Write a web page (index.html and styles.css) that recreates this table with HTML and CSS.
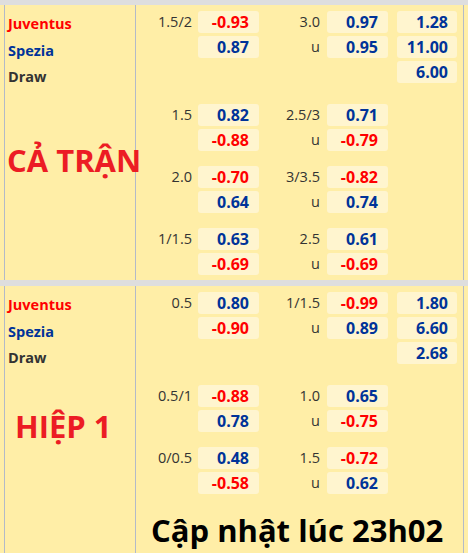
FILE: index.html
```html
<!DOCTYPE html>
<html lang="vi">
<head>
<meta charset="utf-8">
<title>Tỷ lệ Juventus - Spezia</title>
<link rel="stylesheet" href="styles.css">
</head>
<body>
<div class="bar"></div>
<section class="section">
  <div class="side">
    <div class="teams">
      <div class="home">Juventus</div>
      <div class="away">Spezia</div>
      <div class="draw">Draw</div>
    </div>
    <div class="title title-ft">CẢ TRẬN</div>
  </div>
  <div class="odds">
    <div class="group g3">
      <span class="lbl">1.5/2</span><span class="val red">-0.93</span><span class="lbl">3.0</span><span class="val blue">0.97</span><span class="val blue">1.28</span>
      <span class="lbl"></span><span class="val blue">0.87</span><span class="lbl">u</span><span class="val blue">0.95</span><span class="val blue">11.00</span>
      <span class="lbl"></span><span></span><span class="lbl"></span><span></span><span class="val blue">6.00</span>
    </div>
    <div class="group">
      <span class="lbl">1.5</span><span class="val blue">0.82</span><span class="lbl">2.5/3</span><span class="val blue">0.71</span><span></span>
      <span class="lbl"></span><span class="val red">-0.88</span><span class="lbl">u</span><span class="val red">-0.79</span><span></span>
    </div>
    <div class="group">
      <span class="lbl">2.0</span><span class="val red">-0.70</span><span class="lbl">3/3.5</span><span class="val red">-0.82</span><span></span>
      <span class="lbl"></span><span class="val blue">0.64</span><span class="lbl">u</span><span class="val blue">0.74</span><span></span>
    </div>
    <div class="group">
      <span class="lbl">1/1.5</span><span class="val blue">0.63</span><span class="lbl">2.5</span><span class="val blue">0.61</span><span></span>
      <span class="lbl"></span><span class="val red">-0.69</span><span class="lbl">u</span><span class="val red">-0.69</span><span></span>
    </div>
  </div>
</section>
<div class="bar bar-mid"></div>
<section class="section">
  <div class="side">
    <div class="teams">
      <div class="home">Juventus</div>
      <div class="away">Spezia</div>
      <div class="draw">Draw</div>
    </div>
    <div class="title title-ht">HIỆP 1</div>
  </div>
  <div class="odds">
    <div class="group g3">
      <span class="lbl">0.5</span><span class="val blue">0.80</span><span class="lbl">1/1.5</span><span class="val red">-0.99</span><span class="val blue">1.80</span>
      <span class="lbl"></span><span class="val red">-0.90</span><span class="lbl">u</span><span class="val blue">0.89</span><span class="val blue">6.60</span>
      <span class="lbl"></span><span></span><span class="lbl"></span><span></span><span class="val blue">2.68</span>
    </div>
    <div class="group">
      <span class="lbl">0.5/1</span><span class="val red">-0.88</span><span class="lbl">1.0</span><span class="val blue">0.65</span><span></span>
      <span class="lbl"></span><span class="val blue">0.78</span><span class="lbl">u</span><span class="val red">-0.75</span><span></span>
    </div>
    <div class="group">
      <span class="lbl">0/0.5</span><span class="val blue">0.48</span><span class="lbl">1.5</span><span class="val red">-0.72</span><span></span>
      <span class="lbl"></span><span class="val red">-0.58</span><span class="lbl">u</span><span class="val blue">0.62</span><span></span>
    </div>
    <div class="updated">Cập nhật lúc 23h02</div>
  </div>
</section>
</body>
</html>
```

FILE: styles.css
```css
html, body {
  margin: 0;
  padding: 0;
  background: #ffeea7;
  font-family: "Open Sans", "Noto Sans", sans-serif;
  overflow: hidden;
}

.bar {
  height: 5px;
  background: #dedede;
}

.bar-mid {
  height: 6px;
}

.section {
  display: grid;
  grid-template-columns: 131px 326px;
  margin: 0 4px;
  border-left: 1px solid #b3bac8;
  border-right: 1px solid #b3bac8;
}

.side {
  border-right: 1px solid #b3bac8;
  padding-top: 6px;
  position: relative;
  z-index: 1;
}

.teams {
  padding-left: 3px;
  font-size: 14.5px;
  font-weight: 700;
  line-height: 26.5px;
}

.home { color: #ff0000; }
.away { color: #003399; }
.draw { color: #333333; }

.title {
  color: #ec1c24;
  font-weight: 700;
  font-size: 31px;
  line-height: 31px;
  white-space: nowrap;
}

.title-ft {
  margin-top: 54px;
  padding-left: 2px;
}

.title-ht {
  margin-top: 39px;
  padding-left: 10px;
}

.odds {
  padding: 6px 0 5px;
  display: flex;
  flex-direction: column;
  gap: 15px;
}

.group {
  display: grid;
  grid-template-columns: 62px 61px 68px 61px 69px;
  grid-auto-rows: 22px;
  row-gap: 3px;
}

.group > :nth-child(5n) {
  margin-left: 9px;
}

.g3 {
  margin-bottom: 6px;
}

.lbl {
  text-align: right;
  padding-right: 6px;
  font-size: 14.5px;
  line-height: 22px;
  color: #333333;
}

.lbl:nth-child(5n+3) {
  padding-right: 7px;
}

.val {
  background: #fff5cf;
  border-radius: 3px;
  text-align: right;
  padding-right: 10px;
  font-size: 16px;
  font-weight: 700;
  line-height: 22px;
}

.group > .val:nth-child(5n) {
  padding-right: 9px;
}

.red { color: #ff0000; }
.blue { color: #003399; }

.updated {
  margin-top: 3px;
  padding-left: 15px;
  font-size: 31px;
  font-weight: 700;
  line-height: 36px;
  color: #000000;
  white-space: nowrap;
}
```
